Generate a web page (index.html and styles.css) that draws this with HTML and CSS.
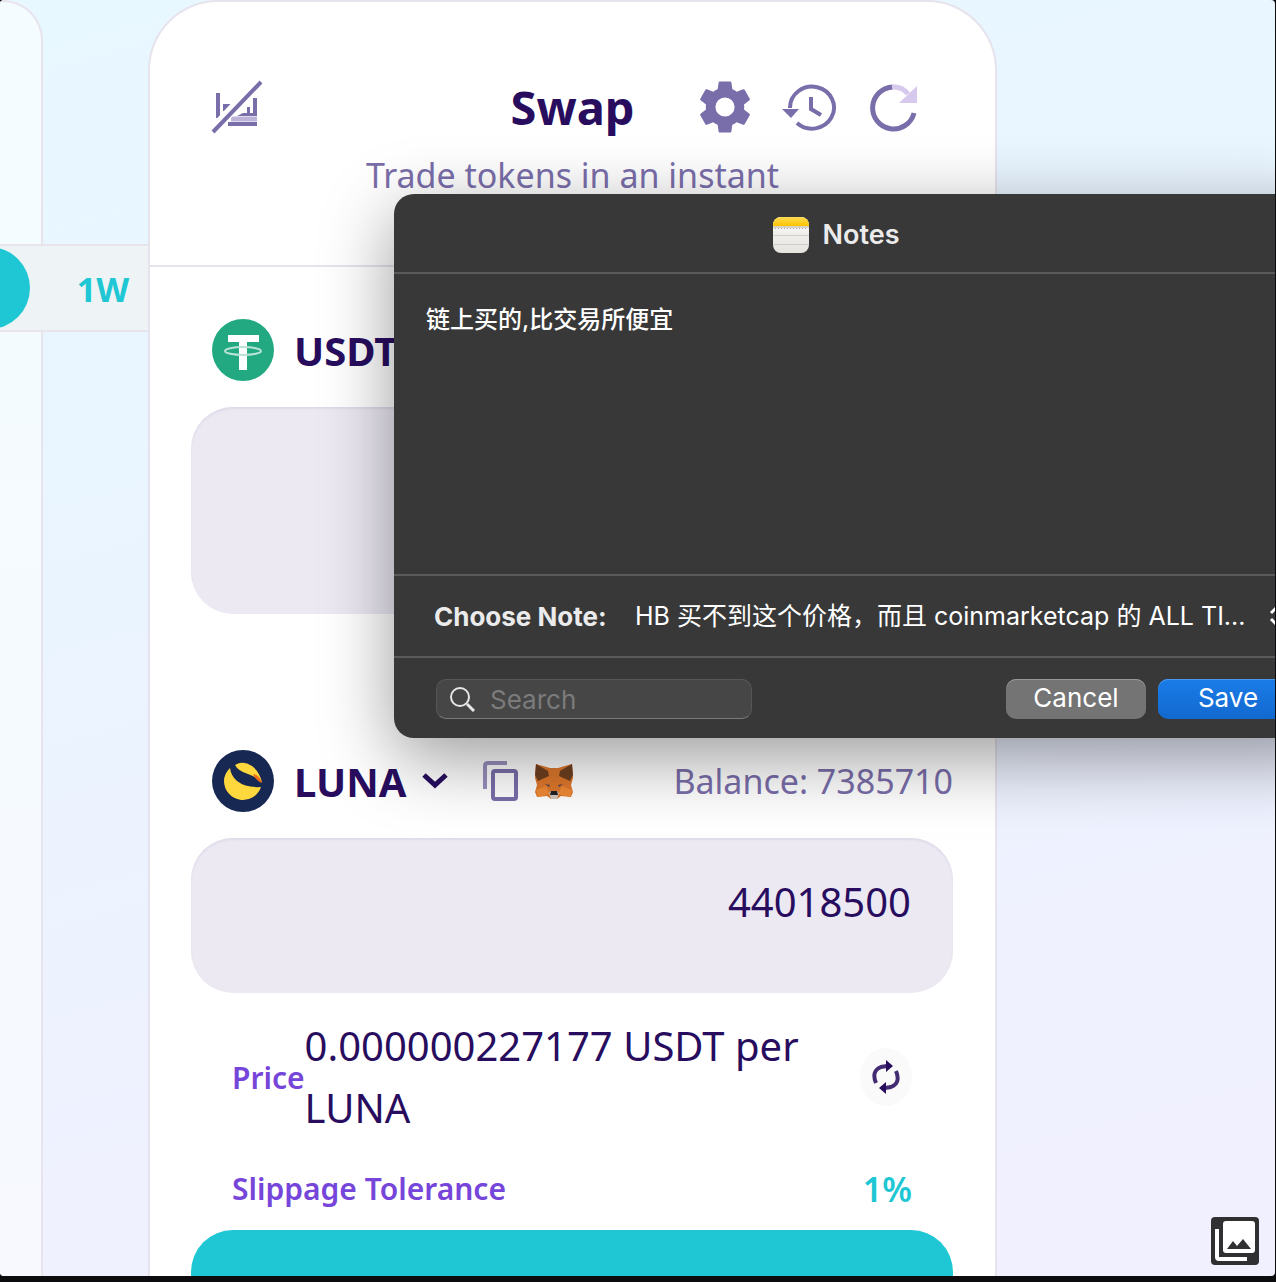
FILE: index.html
```html
<!DOCTYPE html>
<html lang="en">
<head>
<meta charset="utf-8">
<meta name="viewport" content="width=device-width, initial-scale=1">
<title>Swap</title>
<link rel="stylesheet" href="styles.css">
</head>
<body>
<main class="screen">
  <aside class="chart">
    <div class="chart-panel chart-panel-top"></div>
    <div class="ranges">
      <button class="range range-active" type="button" aria-label="Current range"></button>
      <button class="range" type="button">1W</button>
    </div>
    <div class="chart-panel chart-panel-rest"></div>
  </aside>

  <section class="swap">
    <header class="swap-header">
      <div class="swap-top">
        <button class="icon-button" type="button" aria-label="Hide chart">
          <svg width="52" height="54" viewBox="0 0 52 54" fill="none" stroke="#7a6eaa">
            <path d="M7 13v25" stroke-width="4"/>
            <path d="M14 31v-5h6" stroke-width="4"/>
            <path d="M26 36h20V18h-4v15h-3v-6h-3v6h-4z" fill="#7a6eaa" stroke="none"/>
            <path d="M20 39h26" stroke="#bdb3d8" stroke-width="5"/>
            <path d="M17 44h29" stroke-width="4"/>
            <path d="M0 52L49 0" stroke="#fff" stroke-width="10"/>
            <path d="M2 52L50 2" stroke-width="4"/>
          </svg>
        </button>
        <h1 class="swap-title">Swap</h1>
        <div class="swap-tools">
          <button class="icon-button" type="button" aria-label="Settings">
            <svg width="64" height="64" viewBox="0 0 24 24" fill="#7a6eaa"><path d="M19.14 12.94c.04-.3.06-.61.06-.94 0-.32-.02-.64-.07-.94l2.03-1.58c.18-.14.23-.41.12-.61l-1.92-3.32c-.12-.22-.37-.29-.59-.22l-2.39.96c-.5-.38-1.03-.7-1.62-.94l-.36-2.54c-.04-.24-.24-.41-.48-.41h-3.84c-.24 0-.43.17-.47.41l-.36 2.54c-.59.24-1.13.57-1.62.94l-2.39-.96c-.22-.08-.47 0-.59.22L2.74 8.87c-.12.21-.08.47.12.61l2.03 1.58c-.05.3-.09.63-.09.94s.02.64.07.94l-2.03 1.58c-.18.14-.23.41-.12.61l1.92 3.32c.12.22.37.29.59.22l2.39-.96c.5.38 1.03.7 1.62.94l.36 2.54c.05.24.24.41.48.41h3.84c.24 0 .44-.17.47-.41l.36-2.54c.59-.24 1.13-.56 1.62-.94l2.39.96c.22.08.47 0 .59-.22l1.92-3.32c.12-.22.07-.47-.12-.61l-2.01-1.58zM12 15.6A3.6 3.6 0 1 1 12 8.400a3.6 3.6 0 0 1 0 7.200z"/></svg>
          </button>
          <button class="icon-button" type="button" aria-label="History">
            <svg width="56" height="56" viewBox="0 0 56 56" fill="none" stroke="#7a6eaa" stroke-width="4">
              <path d="M9 29A22 21 0 1 1 16 44"/><path d="M1 30h17l-8 9z" fill="#7a6eaa" stroke="none"/><path d="M30 18v12l10 6"/>
            </svg>
          </button>
          <button class="icon-button" type="button" aria-label="Refresh">
            <svg width="56" height="56" viewBox="0 0 56 56" fill="none" stroke-width="5">
              <path d="M28 8a21 21 0 1 0 21 26" stroke="#7a6eaa"/><path d="M27 8q10-1 16 7" stroke="#d7c9ed"/><path d="M52 7v17H34z" fill="#d7c9ed"/>
            </svg>
          </button>
        </div>
      </div>
      <p class="swap-subtitle">Trade tokens in an instant</p>
    </header>

    <div class="swap-body">
      <div class="token-row">
        <svg class="coin" viewBox="0 0 62 62">
          <circle cx="31" cy="31" r="31" fill="#22a981"/>
          <path d="M16 16h31v7H35v28h-8V23H16z" fill="#fff"/>
          <ellipse cx="31" cy="32" rx="18" ry="4" fill="none" stroke="#b9e3d6" stroke-width="2"/>
        </svg>
        <button class="token" type="button">USDT</button>
      </div>
      <input class="amount amount-from" type="text" aria-label="USDT amount">

      <div class="token-row token-row-to">
        <svg class="coin" viewBox="0 0 62 62">
          <circle cx="31" cy="31" r="31" fill="#172852"/>
          <path d="M18 18q-6 6-6 13a19 19 0 0 0 37 6q-15 1-24-6-6-5-7-13z" fill="#ffd83d"/>
          <path d="M23 15q8-5 17 1 7 5 10 16-6-5-14-8-10-3-13-9z" fill="#ffd83d"/>
          <path d="M41 24q7 1 9 9-6-2-9-9z" fill="#ec6d14"/>
        </svg>
        <button class="token" type="button">LUNA
          <svg width="26" height="16" viewBox="0 0 26 16" fill="none" stroke="#280d5f" stroke-width="5"><path d="M2 2l11 10L24 2"/></svg>
        </button>
        <button class="icon-button copy" type="button" aria-label="Copy address">
          <svg width="36" height="40" viewBox="0 0 36 40" fill="none" stroke="#7a6eaa" stroke-width="4">
            <rect x="10" y="10" width="23" height="28" rx="2"/><path d="M2 28V5q0-3 3-3h19" stroke="#9a90bf"/>
          </svg>
        </button>
        <button class="icon-button fox" type="button" aria-label="Add to MetaMask">
          <svg width="40" height="38" viewBox="0 0 40 38">
            <path d="M2 2l14 4h8l14-4 1 14-2 7 2 7-2 5-10-1-4 3h-6l-4-3-10 1-2-5 2-7-2-7z" fill="#df782c"/>
            <path d="M2 2l12 7 1 5-11 5-3-6zM38 2l-12 7-1 5 11 5 3-6z" fill="#70401f"/>
            <path d="M2 28l10-4 4 8-12 3zM38 28l-10-4-4 8 12 3z" fill="#f08a36"/>
            <path d="M11 22l5 1-1 2zM29 22l-5 1 1 2z" fill="#5b4650"/>
            <path d="M15 31l2-2h6l2 2-2 6h-6z" fill="#d3c6bd"/><path d="M17 29h6l1 4h-8z" fill="#252226"/>
          </svg>
        </button>
        <span class="balance">Balance: 7385710</span>
      </div>
      <input class="amount amount-to" type="text" value="44018500" aria-label="LUNA amount">

      <div class="detail price">
        <span class="label">Price</span>
        <span class="price-value">0.000000227177 USDT per LUNA</span>
        <button class="flip" type="button" aria-label="Invert price">
          <svg width="28" height="34" viewBox="0 0 28 34" fill="none" stroke="#432b72" stroke-width="4">
            <path d="M4 23Q-1 11 9 7l6-1M24 11q5 12-5 16l-6 1"/><path d="M14 0l7 6-7 6zM14 22l-7 6 7 6z" fill="#280d5f" stroke="none"/>
          </svg>
        </button>
      </div>
      <div class="detail slippage">
        <span class="label">Slippage Tolerance</span>
        <span class="percent">1%</span>
      </div>
      <button class="submit" type="button" aria-label="Swap tokens"></button>
    </div>
  </section>

  <form class="notes" role="dialog" aria-labelledby="notes-title">
    <header class="notes-header">
      <svg width="36" height="36" viewBox="0 0 36 36">
        <defs>
          <linearGradient id="yellow" x2="0" y2="1"><stop stop-color="#ffdc55"/><stop offset="1" stop-color="#ffc400"/></linearGradient>
          <linearGradient id="paper" x2="0" y2="1"><stop stop-color="#fafafa"/><stop offset="1" stop-color="#e5e3dc"/></linearGradient>
        </defs>
        <rect width="36" height="36" rx="8" fill="url(#paper)"/>
        <path d="M0 9V8a8 8 0 0 1 8-8h20a8 8 0 0 1 8 8v1z" fill="url(#yellow)"/>
        <path d="M0 10h36" stroke="#b9b29f"/><path d="M2 11.500h33" stroke="#aaa" stroke-dasharray="1 2"/>
        <path d="M0 18.500h36M0 27.500h36" stroke="#cfcfd2"/>
      </svg>
      <h2 class="notes-title" id="notes-title">Notes</h2>
    </header>
    <textarea class="notes-text" aria-label="Note text" spellcheck="false">链上买的,比交易所便宜</textarea>
    <div class="choose">
      <label class="choose-label" for="note">Choose Note:</label>
      <select class="choose-select" id="note"><option>HB 买不到这个价格，而且 coinmarketcap 的 ALL TI...</option></select>
      <svg width="16" height="24" viewBox="0 0 16 24" fill="none" stroke="#fff" stroke-width="3"><path d="M2 9l6-6 6 6M2 15l6 6 6-6"/></svg>
    </div>
    <footer class="notes-footer">
      <label class="search">
        <svg width="26" height="26" viewBox="0 0 26 26" fill="none" stroke="#e6e6e6" stroke-width="2"><circle cx="10" cy="11" r="9"/><path d="M17 18l7 7" stroke-width="3"/></svg>
        <input class="search-input" type="search" placeholder="Search" aria-label="Search">
      </label>
      <button class="push" type="button">Cancel</button>
      <button class="push push-primary" type="submit">Save</button>
    </footer>
  </form>

  <button class="gallery" type="button" aria-label="Open gallery">
    <svg width="48" height="48" viewBox="0 0 48 48">
      <rect width="48" height="48" rx="4" fill="#303032"/>
      <path d="M4 12h4v28h28v4H8q-4 0-4-4z" fill="#fff"/>
      <rect x="12" y="4" width="32" height="32" rx="3" fill="#fff"/>
      <path d="M16 32l6-8 4 5 6-7 8 10z" fill="#303032"/>
    </svg>
  </button>
</main>
</body>
</html>
```
FILE: styles.css
```css
* { box-sizing: border-box; }

body {
  margin: 0;
  background: #0c0c0e;
  color: #280d5f;
  font-family: "Noto Sans", "Noto Sans CJK SC", sans-serif;
}

h1, h2, p { margin: 0; }

button, input, select, textarea {
  margin: 0;
  padding: 0;
  border: 0;
  background: none;
  color: inherit;
  font: inherit;
}

svg { display: block; flex: none; }

.screen {
  position: relative;
  display: flex;
  height: calc(100vh - 6px);
  margin-right: 1px;
  border-radius: 4px;
  overflow: hidden;
  background: linear-gradient(165deg, #e8f8ff 0%, #e9f5ff 30%, #eff1ff 75%, #f1f0ff 100%);
}

/* chart column */
.chart {
  display: flex;
  flex: none;
  flex-direction: column;
  width: 148px;
}

.chart-panel {
  width: 43px;
  border-right: 2px solid #e8e4ee;
  background: #f4fcff;
}

.chart-panel-top {
  height: 244px;
  border-top: 2px solid #e8e4ee;
  border-radius: 0 40px 0 0;
}

.chart-panel-rest {
  flex: 1;
  background: linear-gradient(#f4fbff, #f7f9ff);
}

.ranges {
  display: flex;
  height: 88px;
  border: solid #e8e4ee;
  border-width: 2px 0;
  background: #eef4f5;
}

.range {
  flex: 1;
  padding-top: 2px;
  color: #1fc7d4;
  font-size: 34px;
  font-weight: 700;
}

.range-active {
  flex: none;
  width: 90px;
  height: 82px;
  margin: 1px 28px 0 -60px;
  border-radius: 41px;
  background: #1fc7d4;
}

/* swap card */
.swap {
  flex: none;
  width: 849px;
  border: 2px solid #e7e3ed;
  border-bottom: 0;
  border-radius: 70px 70px 0 0;
  background: #fff;
}

.swap-header {
  height: 265px;
  padding: 76px 61px 0;
  border-bottom: 2px solid #e7e3ed;
}

.swap-top {
  display: grid;
  grid-template-columns: 1fr auto 1fr;
  align-items: center;
  height: 58px;
}

.swap-title {
  font-size: 47px;
  font-weight: 700;
  line-height: 56px;
}

.swap-tools {
  display: flex;
  gap: 28px;
  justify-content: flex-end;
  padding-right: 13px;
}

.icon-button {
  display: flex;
  align-items: center;
  justify-content: center;
  width: 56px;
  height: 56px;
}

.swap-top > .icon-button { justify-content: flex-start; }

.swap-subtitle {
  margin-top: 15px;
  color: #7a6eaa;
  font-size: 34px;
  line-height: 48px;
  text-align: center;
}

.swap-body { padding: 48px 42px 0 41px; }

.token-row {
  display: flex;
  align-items: center;
  height: 70px;
  padding-left: 21px;
}

.token-row-to { margin-top: 132px; }

.coin { width: 62px; height: 62px; }

.token {
  display: flex;
  gap: 16px;
  align-items: center;
  margin-left: 20px;
  font-size: 40px;
  font-weight: 700;
}

.copy { width: 36px; margin-left: 35px; }
.fox { width: 40px; margin-left: 15px; }

.balance {
  margin-left: auto;
  color: #7a6eaa;
  font-size: 34px;
}

.amount {
  display: block;
  width: 100%;
  margin-top: 22px;
  padding: 0 42px;
  border-radius: 42px;
  background: #ece9f3;
  box-shadow: inset 0 2px 2px #dfdbe8;
  font-size: 40px;
  text-align: right;
}

.amount-from { height: 207px; }
.amount-to { height: 155px; padding-bottom: 28px; }

.detail {
  display: flex;
  align-items: center;
  justify-content: space-between;
  padding: 0 41px;
}

.label {
  color: #7645d9;
  font-size: 30px;
  font-weight: 600;
}

.price { height: 124px; margin-top: 22px; }

.price-value {
  flex: 1;
  font-size: 40px;
  line-height: 62px;
}

.flip {
  display: flex;
  align-items: center;
  justify-content: center;
  width: 52px;
  height: 58px;
  border-radius: 50%;
  background: #fafafa;
}

.slippage { height: 91px; padding-top: 8px; }

.percent {
  color: #1fc7d4;
  font-size: 34px;
  font-weight: 600;
}

.submit {
  width: 100%;
  height: 100px;
  border-radius: 42px;
  background: #1fc7d4;
}

/* notes dialog, runs past the right edge of the screen */
.notes {
  position: absolute;
  top: 194px;
  right: -65px;
  left: 394px;
  border-radius: 20px;
  background: #383838;
  box-shadow: 0 20px 72px rgb(0 0 0 / 40%);
  color: #fff;
  font-family: Inter, "Noto Sans CJK SC", sans-serif;
  font-size: 26px;
}

.notes-header {
  display: flex;
  gap: 13px;
  align-items: center;
  justify-content: center;
  height: 80px;
  padding: 3px 61px 0 0;
  border-bottom: 2px solid #5a5a5a;
}

.notes-title {
  color: #ebebeb;
  font-size: 27px;
  font-weight: 600;
}

.notes-text {
  display: block;
  width: 100%;
  height: 300px;
  padding: 28px 32px;
  outline: 0;
  font-size: 24px;
  font-weight: 500;
  line-height: 36px;
  resize: none;
}

.choose {
  display: flex;
  align-items: center;
  height: 84px;
  padding-left: 40px;
  border: solid #5a5a5a;
  border-width: 2px 0;
}

.choose-label {
  width: 201px;
  color: #ebebeb;
  font-weight: 700;
}

.choose-select {
  width: 634px;
  height: 44px;
  appearance: none;
  font-size: 25px;
}

.notes-footer {
  display: flex;
  gap: 12px;
  align-items: center;
  height: 80px;
  padding: 2px 42px 0;
}

.search {
  display: flex;
  gap: 14px;
  align-items: center;
  width: 316px;
  height: 40px;
  margin-right: auto;
  padding: 0 13px;
  border: 1px solid #565656;
  border-bottom-color: #7a7a7a;
  border-radius: 10px;
  background: #464646;
}

.search-input {
  width: 100%;
  outline: 0;
}

.search-input::placeholder { color: #7b7b7b; }

.push {
  width: 140px;
  height: 40px;
  padding-bottom: 3px;
  border-radius: 10px;
  background: #747474;
  box-shadow: inset 0 1px #989898;
}

.push-primary {
  background: linear-gradient(#1b7ce8, #1269cf);
  box-shadow: inset 0 1px #4d99f0;
}

/* floating gallery button */
.gallery {
  position: absolute;
  right: 16px;
  bottom: 11px;
}
```
